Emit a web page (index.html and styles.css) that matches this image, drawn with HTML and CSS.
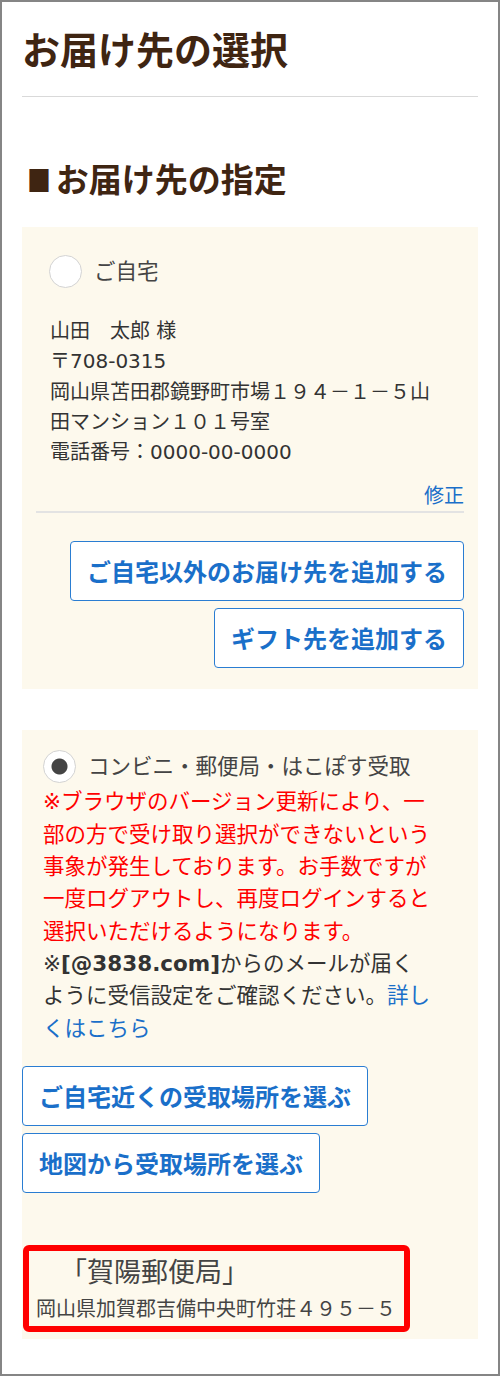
FILE: index.html
```html
<!DOCTYPE html>
<html lang="ja">
<head>
    <meta charset="UTF-8">
    <meta name="viewport" content="width=device-width, initial-scale=1.0">
    <title>お届け先の選択</title>
    <link rel="stylesheet" href="styles.css">
</head>
<body>
    <div class="page">
        <h1 class="page-title">お届け先の選択</h1>

        <h2 class="section-title"><span class="mark">■</span>お届け先の指定</h2>

        <!-- ご自宅 -->
        <div class="option">
            <label class="radio-row">
                <input type="radio" class="radio" name="destination" value="home">
                <span>ご自宅</span>
            </label>
            <p class="address">
                山田　太郎 様<br>
                〒708-0315<br>
                岡山県苫田郡鏡野町市場１９４－１－５山田マンション１０１号室<br>
                電話番号：0000-00-0000
            </p>
            <div class="edit-row"><a href="#">修正</a></div>
            <div class="actions">
                <button class="btn">ご自宅以外のお届け先を追加する</button>
                <button class="btn">ギフト先を追加する</button>
            </div>
        </div>

        <!-- コンビニ・郵便局 -->
        <div class="option option-pickup">
            <div class="pickup-body">
                <label class="radio-row">
                    <input type="radio" class="radio" name="destination" value="pickup" checked>
                    <span>コンビニ・郵便局・はこぽす受取</span>
                </label>
                <p class="notice">
                    <span class="warn">※ブラウザのバージョン更新により、一部の方で受け取り選択ができないという事象が発生しております。お手数ですが一度ログアウトし、再度ログインすると選択いただけるようになります。</span><br>
                    ※<strong>[@3838.com]</strong>からのメールが届くように受信設定をご確認ください。<a href="#">詳しくはこちら</a>
                </p>
            </div>
            <div class="actions">
                <button class="btn">ご自宅近くの受取場所を選ぶ</button>
                <button class="btn">地図から受取場所を選ぶ</button>
            </div>
            <div class="selected-place">
                <div class="place-name">「賀陽郵便局」</div>
                <div class="place-address">岡山県加賀郡吉備中央町竹荘４９５－５</div>
            </div>
        </div>
    </div>
</body>
</html>
```

FILE: styles.css
```css
body {
    margin: 0;
    font-family: "DejaVu Sans", "Noto Sans CJK JP", sans-serif;
    color: #333;
    background: #fff;
}
.page {
    box-sizing: border-box;
    height: 1376px;
    border: 2px solid #858585;
    padding: 24px 20px 0;
}
.page-title {
    margin: 0;
    padding-bottom: 26px;
    border-bottom: 1px solid #d9d9d9;
    font-family: "Noto Sans CJK JP", sans-serif;
    font-size: 38px;
    line-height: 44px;
    font-weight: 700;
    color: #3f2512;
}
.section-title {
    margin: 61px 0 29px;
    padding-left: 5px;
    font-family: "Noto Sans CJK JP", sans-serif;
    font-size: 33px;
    line-height: 40px;
    font-weight: 700;
    color: #3f2512;
}
.section-title .mark {
    display: inline-block;
    margin-right: 5px;
    font-family: "DejaVu Sans", sans-serif;
    font-size: 25px;
    line-height: 1;
    transform: scaleY(1.2);
    vertical-align: 6px;
}
.option {
    background: #fdf9ed;
    padding: 14px 14px 21px;
}
.option + .option {
    margin-top: 41px;
}
.option-pickup {
    padding: 20px 0 7px;
}
.radio-row {
    display: flex;
    align-items: center;
    gap: 12px;
    margin: 14px 0 0 13px;
    font-size: 21.5px;
    line-height: 33px;
    color: #444;
}
.option-pickup .radio-row {
    margin: 0;
}
.radio {
    appearance: none;
    flex: none;
    box-sizing: border-box;
    width: 33px;
    height: 33px;
    margin: 0;
    border: 1px solid #d3d3d3;
    border-radius: 50%;
    background: #fff;
}
.radio:checked {
    background: radial-gradient(circle, #444 0 7.5px, #fff 8.5px);
}
.address {
    margin: 28px 0 0;
    padding: 0 20px 0 14px;
    font-size: 20px;
    line-height: 30.3px;
}
.edit-row {
    margin-top: 12px;
    padding-top: 2px;
    border-bottom: 2px solid #e3e3e3;
    text-align: right;
    font-size: 20px;
    line-height: 30px;
}
.edit-row a,
.notice a {
    color: #1a6fc9;
    text-decoration: none;
}
.actions {
    display: flex;
    flex-direction: column;
    align-items: flex-end;
    gap: 7px;
    margin-top: 28px;
}
.option-pickup .actions {
    align-items: flex-start;
    margin-top: 21.5px;
}
.btn {
    box-sizing: border-box;
    height: 60px;
    padding: 0 16px;
    border: 1px solid #2a7dd2;
    border-radius: 4px;
    background: #fff;
    color: #1a6fc9;
    font-family: "Noto Sans CJK JP", sans-serif;
    font-size: 24px;
    line-height: 58px;
    font-weight: 700;
    cursor: pointer;
}
.pickup-body {
    padding: 0 45px 0 21px;
}
.notice {
    margin: 0;
    padding-top: 3px;
    font-size: 21.5px;
    line-height: 32.3px;
}
.notice .warn {
    color: #ff0000;
}
.selected-place {
    width: fit-content;
    margin: 52px 0 0 1px;
    padding: 3px 8px 0 7px;
    border: 6px solid #ff0000;
    border-radius: 6px;
    color: #444;
}
.place-name {
    padding-left: 24px;
    font-size: 27px;
    line-height: 38px;
}
.place-address {
    font-size: 20px;
    line-height: 34px;
}
```
